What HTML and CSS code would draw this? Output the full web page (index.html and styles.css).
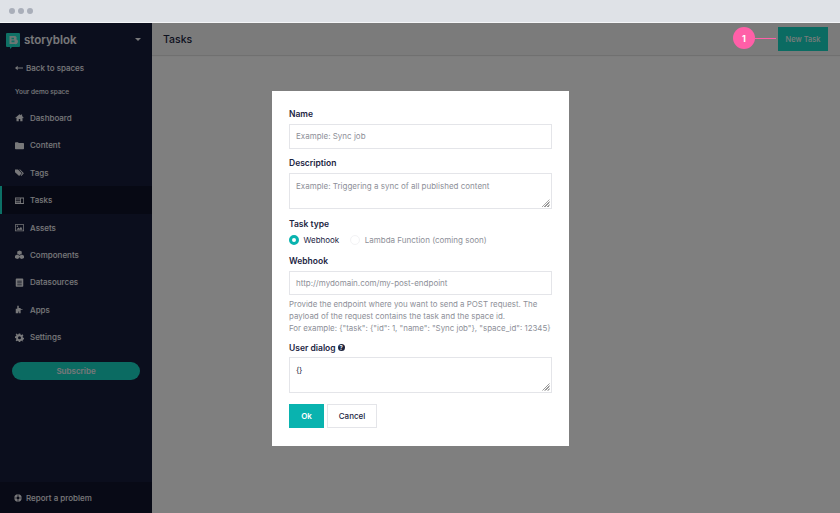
FILE: index.html
```html
<!DOCTYPE html>
<html lang="en">
<head>
<meta charset="utf-8">
<title>Tasks</title>
<link rel="stylesheet" href="styles.css">
</head>
<body>
<div class="chrome"><i></i><i></i><i></i></div>
<div class="app">
  <aside class="sidebar">
    <div class="brand">
      <svg class="logo" viewBox="0 0 14 16" width="14" height="16"><path d="M1 0h12a1 1 0 0 1 1 1v12a1 1 0 0 1-1 1H6l-2 2v-2H1a1 1 0 0 1-1-1V1a1 1 0 0 1 1-1z" fill="#1ee0cc"/><path d="M3.500 3h5a2 2 0 0 1 1.700 3.300A2.300 2.300 0 0 1 8.700 11H3.500zM5.500 4.700v1.500h2.500v-1.500zM5.500 7.600v1.700h3v-1.700z" fill="#d8ece9" fill-rule="evenodd"/></svg>
      <span class="brand-name">storyblok</span>
      <span class="caret"></span>
    </div>
    <div class="back"><svg class="arrow" viewBox="0 0 9 6"><path d="M0 3 3 .5v2h6v1H3v2z"/></svg>Back to spaces</div>
    <div class="space">Your demo space</div>
    <nav class="nav">
      <a class="item"><svg viewBox="0 0 12 12"><path d="M6 1.500 0.500 6.300l.6.700L2 6.300V11h3V8h2v3h3V6.300l.9.700.6-.7L9.500 4.100V2H8v.9z"/></svg>Dashboard</a>
      <a class="item"><svg viewBox="0 0 12 12"><path d="M0 2.500a1 1 0 0 1 1-1h3l1 1.300h6a1 1 0 0 1 1 1V10a1 1 0 0 1-1 1H1a1 1 0 0 1-1-1z"/></svg>Content</a>
      <a class="item"><svg viewBox="0 0 12 12"><path d="M0 2h4l5 5-3.500 3.500L0 5.500zM5.500 2h1.300l5 5-3.300 3.500-.9-.9L10 7z"/></svg>Tags</a>
      <a class="item active"><svg viewBox="0 0 12 12"><path d="M0 2h12v8.500H0zM1 3.200v1.300h6V3.200zM8 3.200v6h3v-6zM1 5.500v1h6v-1zM1 7.500v1h6v-1z" fill-rule="evenodd"/></svg>Tasks</a>
      <a class="item"><svg viewBox="0 0 12 12"><path d="M0 1.500h12v9.500H0zM1 2.500v7.500h10V2.500zM2 9l2.500-3L6 7.500 8 5l2 4z" fill-rule="evenodd"/><circle cx="3.200" cy="4.200" r="1"/></svg>Assets</a>
      <a class="item"><svg viewBox="0 0 12 12"><path d="M6 .5 9 2v3L6 6.500 3 5V2zM3 6l3 1.500v3L3 12 0 10.500v-3zM9 6l3 1.500v3L9 12l-3-1.500v-3z"/></svg>Components</a>
      <a class="item"><svg viewBox="0 0 12 12"><path d="M2 .5h8a1 1 0 0 1 1 1v9a1 1 0 0 1-1 1H2a1 1 0 0 1-1-1v-9a1 1 0 0 1 1-1zM3 3.500v1h6v-1zM3 6v1h6V6zM3 8.500v1h6v-1z" fill-rule="evenodd"/></svg>Datasources</a>
      <a class="item"><svg viewBox="0 0 12 12"><path d="M3 1h2v3h2.500v1.500H10v1H7.500V11H5.500V8.500h-1V11H1V5h2z"/></svg>Apps</a>
      <a class="item"><svg viewBox="0 0 12 12"><path d="M5 .5h2l.3 1.600 1.300.6L10 1.800l1.200 1.600-1 1.200.3 1.400 1.500.6v1.800l-1.500.6-.3 1.200 1 1.300L10 11l-1.400-.8-1.300.6L7 12H5l-.3-1.200-1.300-.6L2 11 .8 9.600l1-1.300-.3-1.200L0 6.500V4.700l1.500-.6.300-1.400-1-1.200L2 .8l1.400 1.300 1.300-.6zM6 4.300a2 2 0 1 0 0 4 2 2 0 0 0 0-4z" fill-rule="evenodd"/></svg>Settings</a>
    </nav>
    <div class="subscribe">Subscribe</div>
    <div class="report">
      <svg viewBox="0 0 12 12"><path d="M6 .5a5.500 5.500 0 1 0 0 11 5.500 5.500 0 0 0 0-11zM6 3.800a2.200 2.200 0 1 1 0 4.400 2.200 2.200 0 0 1 0-4.400z" fill-rule="evenodd"/><path d="M5.500.5h1v3.300h-1zM5.500 8.200h1v3.300h-1zM.5 5.500h3.300v1H.5zM8.200 5.500h3.300v1H8.200z" fill="#10142c"/></svg>
      Report a problem
    </div>
  </aside>
  <main class="main">
    <header class="header">
      <h1 class="title">Tasks</h1>
      <button class="new-task">New Task</button>
    </header>
  </main>
  <div class="overlay">
    <form class="modal">
      <label class="label">Name</label>
      <div class="input ph">Example: Sync job</div>
      <label class="label">Description</label>
      <div class="input area ph">Example: Triggering a sync of all published content<span class="grip"></span></div>
      <label class="label">Task type</label>
      <div class="radios">
        <span class="radio on"></span><span class="radio-text">Webhook</span>
        <span class="radio"></span><span class="radio-text off">Lambda Function (coming soon)</span>
      </div>
      <label class="label hook">Webhook</label>
      <div class="input ph">http://mydomain.com/my-post-endpoint</div>
      <p class="help">Provide the endpoint where you want to send a POST request. The<br>payload of the request contains the task and the space id.<br>For example: {"task": {"id": 1, "name": "Sync job"}, "space_id": 12345}</p>
      <label class="label dialog">User dialog <span class="q">?</span></label>
      <div class="input area val dialog-input"><span class="braces">{}</span><span class="grip"></span></div>
      <div class="actions">
        <button type="button" class="ok">Ok</button>
        <button type="button" class="cancel">Cancel</button>
      </div>
    </form>
  </div>
  <div class="callout"><span class="badge">1</span><span class="line"></span></div>
</div>
</body>
</html>
```
FILE: styles.css
```css
* { box-sizing: border-box; }
html, body { margin: 0; height: 100%; overflow: hidden; }
body { font-family: Inter, "Liberation Sans", sans-serif; font-size: 8px; background: #fff; color: #1b243f; }
.chrome { height: 23px; background: #dfe2e7; border-bottom: 1px solid #f4f5f7; display: flex; align-items: center; gap: 3px; padding: 0 0 1px 9px; }
.chrome i { width: 6px; height: 6px; border-radius: 50%; background: #a9aeb9; }
.app { position: relative; height: 490px; display: flex; }
.sidebar { width: 152px; flex: none; background: #161d3b; color: #f0f0f4; display: flex; flex-direction: column; }
.brand { height: 33px; display: flex; align-items: center; padding: 0 10px 0 6px; }
.logo { flex: none; margin-right: 4px; margin-top: 2px; }
.brand-name { font-size: 11.500px; font-weight: 600; flex: 1; }
.caret { width: 0; height: 0; border: 3px solid transparent; border-top: 3.500px solid #f0f0f4; margin-top: 3px; margin-right: 1px; }
.back { height: 17px; padding: 7px 15px 0; display: flex; align-items: center; font-weight: 500; }
.arrow { width: 8px; height: 6px; fill: #f0f0f4; margin-right: 3px; flex: none; }
.space { height: 31.300px; padding: 14px 15px 0; font-size: 6.500px; line-height: 10px; font-weight: 500; }
.nav { display: flex; flex-direction: column; }
.item { height: 27.400px; display: flex; align-items: center; padding-left: 15px; font-weight: 500; }
.item svg { width: 9px; height: 9px; fill: #f0f0f4; margin-right: 6px; flex: none; }
.active { background: #0e1228; box-shadow: inset 2px 0 0 #18e0cc; }
.subscribe { margin: 11px 12px 0; height: 18px; border-radius: 9px; background: #16d6c4; color: #f0f0f4; font-weight: 600; display: flex; align-items: center; justify-content: center; }
.report { margin-top: auto; height: 31px; background: #10142c; display: flex; align-items: center; padding-left: 14px; font-weight: 500; }
.report svg { width: 8px; height: 8px; fill: #f0f0f4; margin-right: 4px; flex: none; }
.main { flex: 1; background: #fff; }
.header { height: 32px; padding: 0 12px 0 11px; display: flex; align-items: center; justify-content: space-between; background: #f6f6f6; box-shadow: 0 1px 1px rgba(0,0,0,.12); }
.title { margin: 0; font-size: 10.500px; font-weight: 500; color: #1b243f; }
.new-task { width: 50px; height: 24px; border: 0; background: #16d6c4; color: #f0f6f5; font: 500 7.500px Inter, sans-serif; padding: 0; }
.overlay { position: absolute; inset: 0; background: rgba(0,0,0,.5); display: flex; align-items: center; justify-content: center; }
.modal { width: 297px; height: 355px; background: #fff; padding: 9px 18px 0 17.500px; display: flex; flex-direction: column; }
.label { margin-top: 9.500px; font-weight: 600; font-size: 8.500px; height: 11px; line-height: 11px; color: #1b243f; flex: none; }
.hook { margin-top: 10px; }
.dialog { margin-top: 8.500px; }
.input { width: 262.500px; height: 24.500px; margin-top: 4px; border: 1px solid #e4e5e9; background: #fff; padding: 0 6px; line-height: 23px; position: relative; flex: none; }
.ph { color: #8d8f98; }
.area { height: 36px; line-height: 9px; padding-top: 8px; }
.val { color: #1b243f; }
.dialog-input { margin-top: 3px; }
.braces { letter-spacing: -.4px; }
.grip { position: absolute; right: 1px; bottom: 1px; width: 8px; height: 8px; background: repeating-linear-gradient(135deg, transparent 0 1px, #999 1px 2px); clip-path: polygon(100% 0, 100% 100%, 0 100%); }
.radios { display: flex; align-items: center; height: 12px; margin-top: 4px; flex: none; }
.radio { width: 10px; height: 10px; border-radius: 50%; border: 1px solid #f3f3f5; margin-right: 4.500px; flex: none; }
.radio.on { background: #fff; border: 3px solid #09b3af; }
.radio-text { margin-right: 11px; color: #1b243f; }
.radio-text.off { color: #8d8f98; }
.help { margin: 3px 0 0; color: #8d8f98; font-size: 7.900px; line-height: 12px; white-space: nowrap; flex: none; }
.q { display: inline-block; width: 7px; height: 7px; border-radius: 50%; background: #1b243f; color: #fff; font-size: 6px; line-height: 7px; text-align: center; vertical-align: 1px; }
.actions { display: flex; gap: 3px; margin-top: 11.500px; flex: none; }
.ok { width: 35px; height: 24px; border: 0; background: #09b3af; color: #fff; font: 600 8px Inter, sans-serif; padding: 0; }
.cancel { width: 50px; height: 24px; border: 1px solid #e4e5e9; background: #fff; color: #1b243f; font: 500 8px Inter, sans-serif; padding: 0; }
.callout { position: absolute; top: 4px; right: 64px; display: flex; align-items: center; }
.badge { width: 22px; height: 22px; border-radius: 50%; background: #ff5fa8; color: #fff; font-weight: 700; font-size: 9px; display: flex; align-items: center; justify-content: center; }
.line { width: 21px; height: 1px; background: #ff5fa8; }
```
